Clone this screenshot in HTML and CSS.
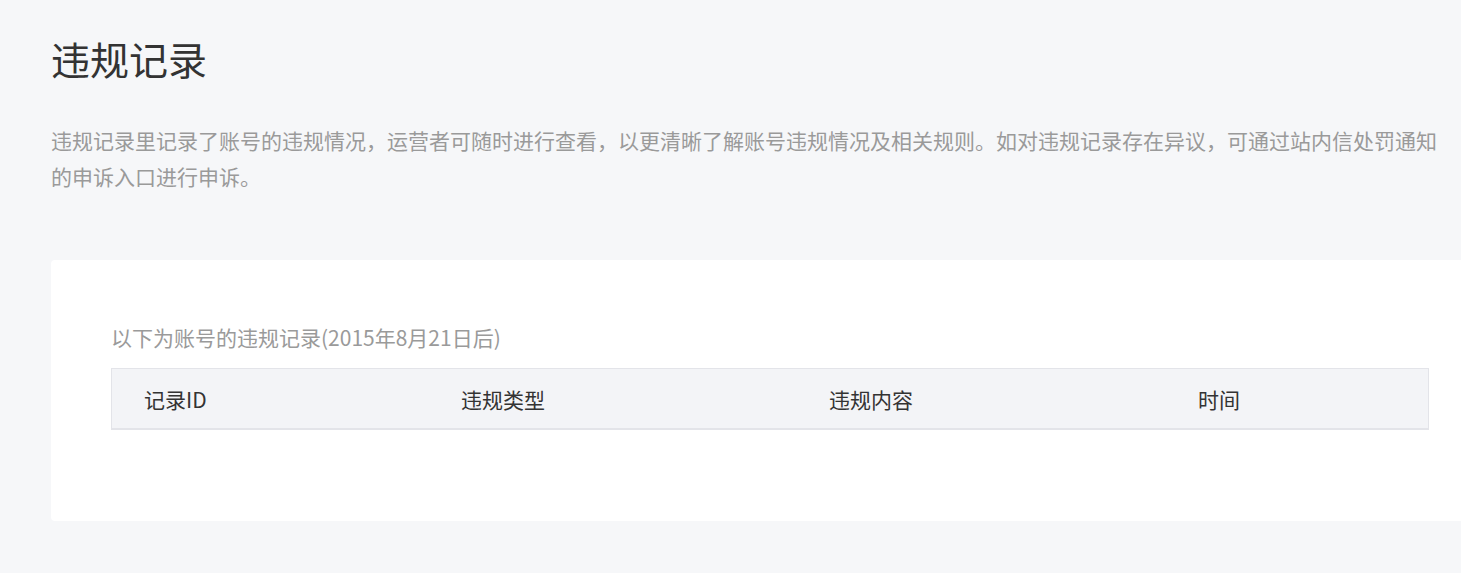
FILE: index.html
```html
<!DOCTYPE html>
<html lang="zh-CN">
<head>
<meta charset="utf-8">
<title>违规记录</title>
<link rel="stylesheet" href="styles.css">
</head>
<body>
<div class="page">
  <h1 class="title">违规记录</h1>
  <p class="desc">违规记录里记录了账号的违规情况，运营者可随时进行查看，以更清晰了解账号违规情况及相关规则。如对违规记录存在异议，可通过站内信处罚通知的申诉入口进行申诉。</p>
  <div class="card">
    <div class="subtitle">以下为账号的违规记录(2015年8月21日后)</div>
    <div class="table-head">
      <div class="cell">记录ID</div>
      <div class="cell">违规类型</div>
      <div class="cell">违规内容</div>
      <div class="cell">时间</div>
    </div>
  </div>
</div>
</body>
</html>
```
FILE: styles.css
```css
html, body {
  margin: 0;
  padding: 0;
  background: #f6f7f9;
  overflow-x: hidden;
}
body {
  font-family: "Noto Sans CJK SC", "Noto Sans", sans-serif;
  color: #333;
}
.page {
  width: 1438px;
  padding: 30px 0 0 51px;
}
.title {
  margin: 0;
  font-size: 39px;
  font-weight: 400;
  line-height: 56px;
  color: #333;
}
.desc {
  margin: 36px 0 0;
  max-width: 1400px;
  font-size: 21px;
  line-height: 36px;
  color: #9a9a9a;
}
.card {
  margin-top: 66px;
  background: #fff;
  border-radius: 4px;
  padding: 62px 60px 91px;
}
.subtitle {
  font-size: 21px;
  line-height: 30px;
  color: #9a9a9a;
}
.table-head {
  margin-top: 16px;
  display: grid;
  grid-template-columns: 317px 368px 369px 1fr;
  background: #f3f4f7;
  border: 1px solid #e3e4e9;
  border-bottom-width: 2px;
  height: 59px;
  align-items: center;
}
.cell {
  padding-left: 32px;
  font-size: 21px;
  line-height: 30px;
  color: #333;
}
```
